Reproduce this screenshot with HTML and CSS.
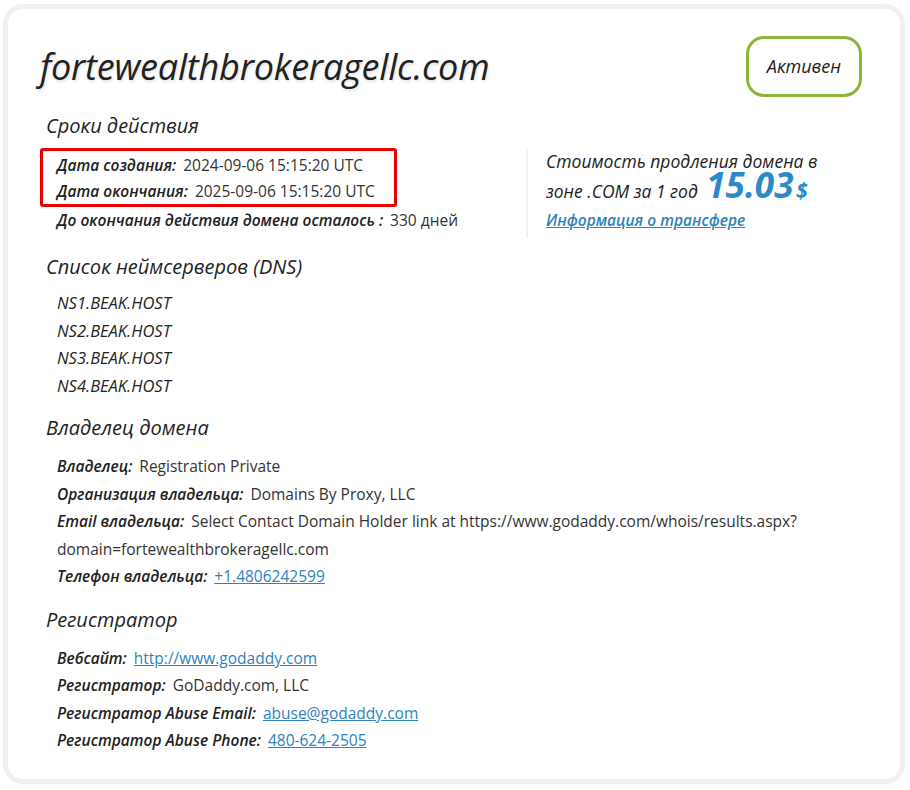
FILE: index.html
```html
<!DOCTYPE html>
<html lang="ru">
<head>
  <meta charset="UTF-8">
  <meta name="viewport" content="width=device-width, initial-scale=1.0">
  <title>fortewealthbrokeragellc.com</title>
  <link rel="stylesheet" href="styles.css">
</head>
<body>
  <div class="card">
    <div class="card-head">
      <h1 class="domain">fortewealthbrokeragellc.com</h1>
      <span class="status">Активен</span>
    </div>

    <h2 class="section-title">Сроки действия</h2>
    <div class="dates">
      <div class="dates-left">
        <div class="highlight">
          <p class="row"><span class="label">Дата создания:</span> 2024-09-06 15:15:20 UTC</p>
          <p class="row"><span class="label">Дата окончания:</span> 2025-09-06 15:15:20 UTC</p>
        </div>
        <p class="row"><span class="label">До окончания действия домена осталось :</span> 330 дней</p>
      </div>
      <div class="price">
        <p class="price-text">Стоимость продления домена в</p>
        <p class="price-text">зоне .COM за 1 год <span class="price-value">15.03</span> <span class="price-cur">$</span></p>
        <a class="price-link" href="#">Информация о трансфере</a>
      </div>
    </div>

    <h2 class="section-title">Список неймсерверов (DNS)</h2>
    <div class="rows ns-list">
      <p class="row ns">NS1.BEAK.HOST</p>
      <p class="row ns">NS2.BEAK.HOST</p>
      <p class="row ns">NS3.BEAK.HOST</p>
      <p class="row ns">NS4.BEAK.HOST</p>
    </div>

    <h2 class="section-title">Владелец домена</h2>
    <div class="rows">
      <p class="row"><span class="label">Владелец:</span> Registration Private</p>
      <p class="row"><span class="label">Организация владельца:</span> Domains By Proxy, LLC</p>
      <p class="row"><span class="label">Email владельца:</span> Select Contact Domain Holder link at https://www.godaddy.com/whois/results.aspx?<wbr>domain=fortewealthbrokeragellc.com</p>
      <p class="row"><span class="label">Телефон владельца:</span> <a href="#">+1.4806242599</a></p>
    </div>

    <h2 class="section-title">Регистратор</h2>
    <div class="rows">
      <p class="row"><span class="label">Вебсайт:</span> <a href="#">http://www.godaddy.com</a></p>
      <p class="row"><span class="label">Регистратор:</span> GoDaddy.com, LLC</p>
      <p class="row"><span class="label">Регистратор Abuse Email:</span> <a href="#">abuse@godaddy.com</a></p>
      <p class="row"><span class="label">Регистратор Abuse Phone:</span> <a href="#">480-624-2505</a></p>
    </div>
  </div>
</body>
</html>
```

FILE: styles.css
```css
body {  margin: 0;  padding: 4px 5px 4px 3px;  background-color: #fff;  font-family: "Open Sans", "Noto Sans", sans-serif;  color: #222;  }
.card {
  border: 5px solid #f0f0f0;  border-radius: 20px;  background-color: #fff;
  padding: 27px 38px 24px 38px;
}
.card-head {  display: flex;  justify-content: space-between;  align-items: center;  }
.domain {
  margin: 0 0 0 -6px;  font-size: 36px;  font-style: italic;  font-weight: 500;  color: #222;
  letter-spacing: -0.2px;  text-shadow: 1px 2px 3px rgba(0,0,0,0.12);
}
.status {
  display: inline-block;  padding: 0 18px;  height: 55px;  line-height: 55px;
  border: 3px solid #8db33a;  border-radius: 18px;  font-size: 18px;  font-style: italic;
}
.section-title {
  margin: 15px 0 8px 0;  font-size: 20px;  line-height: 28px;  font-weight: 400;  font-style: italic;  color: #222;
}
.rows + .section-title {  margin-top: 15px;  }
.section-title + .rows {  margin-top: 11px;  }
.section-title + .ns-list {  margin-top: 6px;  }
.row {  margin: 0 0 0 11px;  font-size: 15.5px;  line-height: 27.5px;  color: #333;  }
.label {  font-style: italic;  font-weight: 600;  color: #222;  margin-right: 3px;  }
.ns {  font-style: italic;  font-size: 16.5px;  color: #222;  }
.row a {  color: #2d83bd;  }
.dates {  display: flex;  }
.dates-left {  flex: 0 0 480px;  }
.highlight {
  margin-left: -6px;  width: 351px;  border: 3px solid #e60000;  border-radius: 3px;
  padding: 1px 0 0 0;
}
.highlight .row {  margin-left: 14px;  line-height: 26px;  }
.price {  border-left: 2px solid #f2f2f2;  padding-left: 18px;  height: 90px;  }
.price-text {  margin: 0;  font-size: 17.5px;  font-style: italic;  line-height: 27px;  color: #222;  }
.price-value {  font-size: 35px;  font-weight: 700;  color: #2b8bc9;  line-height: 20px;  margin-left: 4px;  }
.price-cur {  font-size: 21px;  font-weight: 700;  color: #2b8bc9;  line-height: 20px;  margin-left: -2px;  }
.price-link {  display: inline-block;  margin-top: 4px;  font-size: 15.5px;  font-style: italic;  font-weight: 600;  color: #2d83bd;  }
```
